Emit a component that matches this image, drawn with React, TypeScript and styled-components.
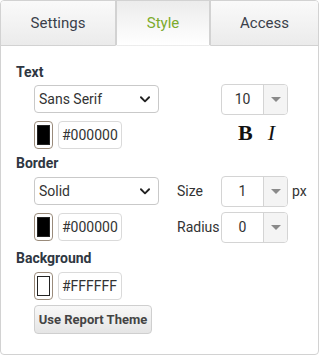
import React from 'react';
import styled, { createGlobalStyle } from 'styled-components';

const GlobalStyle = createGlobalStyle`
  html, body {
    margin: 0;
    padding: 0;
    background: #fff;
  }
  body {
    font-family: Roboto, "Liberation Sans", sans-serif;
    color: #333;
  }
`;

const Panel = styled.div`
  box-sizing: border-box;
  width: 319px;
  height: 355px;
  border: 1px solid #d2d2d2;
  border-radius: 4px;
  overflow: hidden;
  background: #fff;
`;

const TabBar = styled.div`
  display: flex;
  height: 45px;
`;

const Tab = styled.div<{ $active?: boolean; $width: number }>`
  box-sizing: border-box;
  width: ${(p) => p.$width}px;
  display: flex;
  align-items: center;
  justify-content: center;
  font-size: 15px;
  color: ${(p) => (p.$active ? '#7cab2c' : '#3a3f4a')};
  background: ${(p) =>
    p.$active
      ? 'linear-gradient(#ececec, #ffffff)'
      : 'linear-gradient(#fafafa, #ebebeb)'};
  border-bottom: ${(p) => (p.$active ? '1px solid transparent' : '1px solid #d2d2d2')};
  border-left: ${(p) => (p.$active ? '2px solid #d2d2d2' : 'none')};
  border-right: ${(p) => (p.$active ? '2px solid #d2d2d2' : 'none')};
`;

const Body = styled.div`
  padding: 18px 0 0 15px;
`;

const Heading = styled.div`
  font-size: 14px;
  font-weight: bold;
  line-height: 16px;
  color: #2f3742;
`;

const Rows = styled.div<{ $top: number; $bottom: number }>`
  display: grid;
  grid-template-columns: 125px 1fr;
  column-gap: 18px;
  row-gap: 8px;
  padding-left: 18px;
  margin-top: ${(p) => p.$top}px;
  margin-bottom: ${(p) => p.$bottom}px;
`;

const Cell = styled.div`
  display: flex;
  align-items: center;
  height: 28px;
`;

const RightCell = styled(Cell)`
  padding-left: 44px;
  position: relative;
`;

const Select = styled.div`
  box-sizing: border-box;
  width: 125px;
  height: 28px;
  border: 1px solid #c9c9c9;
  border-radius: 4px;
  display: flex;
  align-items: center;
  justify-content: space-between;
  padding: 0 6px 0 4px;
  font-size: 14px;
  color: #333;
`;

const Swatch = styled.div<{ $color: string }>`
  box-sizing: border-box;
  width: 19px;
  height: 28px;
  border: 1px solid #9a8b7b;
  border-radius: 4px;
  padding: 3px 2px;
  background: #fff;
  &::after {
    content: '';
    display: block;
    box-sizing: border-box;
    height: 100%;
    background: ${(p) => p.$color};
    border: 1px solid #222;
  }
`;

const HexInput = styled.div`
  box-sizing: border-box;
  width: 64px;
  height: 28px;
  margin-left: 5px;
  border: 1px solid #dadada;
  border-radius: 4px;
  display: flex;
  align-items: center;
  padding-left: 3px;
  font-size: 14px;
  color: #333;
`;

const Spinner = styled.div`
  box-sizing: border-box;
  width: 67px;
  height: 31px;
  border: 1px solid #d4d4d4;
  border-radius: 4px;
  display: flex;
  overflow: hidden;
`;

const SpinValue = styled.div`
  flex: 1;
  display: flex;
  align-items: center;
  justify-content: center;
  font-size: 14px;
  color: #333;
`;

const SpinButton = styled.div`
  width: 23px;
  border-left: 1px solid #d4d4d4;
  background: #f4f4f4;
  display: flex;
  align-items: center;
  justify-content: center;
  &::after {
    content: '';
    border-left: 5px solid transparent;
    border-right: 5px solid transparent;
    border-top: 5px solid #8a8a8a;
  }
`;

const FieldLabel = styled.span`
  position: absolute;
  left: 0;
  font-size: 14px;
  color: #333;
`;

const Unit = styled.span`
  margin-left: 4px;
  font-size: 14px;
  color: #333;
`;

const FontStyles = styled.div`
  width: 67px;
  display: flex;
  justify-content: center;
  gap: 15px;
  font-family: "Liberation Serif", "DejaVu Serif", serif;
  font-size: 22px;
  color: #111;
  margin-top: -4px;
  padding-left: 4px;
  box-sizing: border-box;
`;

const StyleB = styled.span`
  font-weight: bold;
`;

const StyleI = styled.span`
  font-style: italic;
`;

const ThemeButton = styled.button`
  box-sizing: border-box;
  width: 118px;
  height: 29px;
  margin: 5px 0 0 18px;
  padding: 0;
  border: 1px solid #cfcfcf;
  border-radius: 4px;
  background: linear-gradient(#f8f8f8, #e5e5e5);
  font-family: Roboto, "Liberation Sans", sans-serif;
  font-size: 13px;
  font-weight: bold;
  color: #444;
`;

const Chevron = () => (
  <svg width="14" height="14" viewBox="0 0 24 24" fill="none" stroke="#222" strokeWidth="3.2" strokeLinecap="round" strokeLinejoin="round">
    <polyline points="5 9 12 16 19 9" />
  </svg>
);

const ColorField = ({ color, hex }: { color: string; hex: string }) => (
  <Cell>
    <Swatch $color={color} />
    <HexInput>{hex}</HexInput>
  </Cell>
);

const NumberField = ({ value }: { value: string }) => (
  <Spinner>
    <SpinValue>{value}</SpinValue>
    <SpinButton />
  </Spinner>
);

export default function App() {
  return (
    <>
      <GlobalStyle />
      <Panel>
        <TabBar>
          <Tab $width={114}>Settings</Tab>
          <Tab $width={96} $active>
            Style
          </Tab>
          <Tab $width={107}>Access</Tab>
        </TabBar>
        <Body>
          <Heading>Text</Heading>
          <Rows $top={5} $bottom={6}>
            <Cell>
              <Select>
                Sans Serif
                <Chevron />
              </Select>
            </Cell>
            <RightCell>
              <NumberField value="10" />
            </RightCell>
            <ColorField color="#000" hex="#000000" />
            <RightCell>
              <FontStyles>
                <StyleB>B</StyleB>
                <StyleI>I</StyleI>
              </FontStyles>
            </RightCell>
          </Rows>
          <Heading>Border</Heading>
          <Rows $top={6} $bottom={9}>
            <Cell>
              <Select>
                Solid
                <Chevron />
              </Select>
            </Cell>
            <RightCell>
              <FieldLabel>Size</FieldLabel>
              <NumberField value="1" />
              <Unit>px</Unit>
            </RightCell>
            <ColorField color="#000" hex="#000000" />
            <RightCell>
              <FieldLabel>Radius</FieldLabel>
              <NumberField value="0" />
            </RightCell>
          </Rows>
          <Heading>Background</Heading>
          <Rows $top={6} $bottom={0}>
            <ColorField color="#fff" hex="#FFFFFF" />
          </Rows>
          <ThemeButton>Use Report Theme</ThemeButton>
        </Body>
      </Panel>
    </>
  );
}
